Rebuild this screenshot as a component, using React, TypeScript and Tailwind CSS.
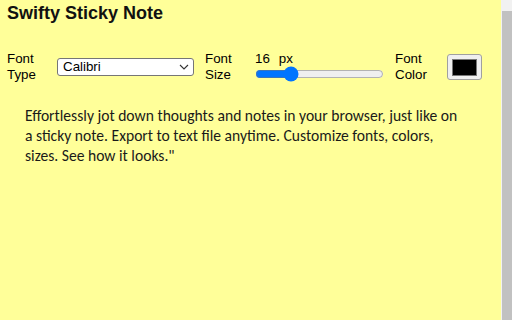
import React from "react";

export default function App() {
  return (
    <div className="flex w-[512px] h-[320px] overflow-hidden bg-[#ffff99]" style={{ fontFamily: '"Liberation Sans", Arial, sans-serif' }}>
      <div className="flex-1 flex flex-col text-black">
        <div className="pl-[7px] pt-[3px] text-[18px] font-bold leading-[21px] text-[#111]">Swifty Sticky Note</div>
        <div className="flex items-center mt-[26px] h-[34px] text-[13.33px] leading-[16px]">
          <div className="ml-[7px] w-[50px]">Font<br />Type</div>
          <div className="flex items-center justify-between w-[137px] h-[18px] bg-white border border-[#767676] rounded-[3px] pl-[5px] pr-[4px]">
            <span>Calibri</span>
            <svg width="10" height="6" viewBox="0 0 10 6" fill="none" stroke="#333" strokeWidth="1.1"><path d="M1 1l4 4 4-4" /></svg>
          </div>
          <div className="ml-[11px] w-[50px]">Font<br />Size</div>
          <div className="flex flex-col w-[129px] -mt-[2px]">
            <div className="leading-[15px] pl-[0px]"><span>16</span><span className="ml-[9px]">px</span></div>
            <input type="range" min={8} max={40} defaultValue={16} className="w-[129px] m-0" style={{ appearance: "auto", accentColor: "#0075ff" }} />
          </div>
          <div className="ml-[11px] w-[52px]">Font<br />Color</div>
          <div className="flex items-center justify-center w-[35px] h-[26px] bg-[#efefef] border border-[#a0a0a0] rounded-[3px]">
            <div className="w-[25px] h-[17px] bg-black border border-[#777]" />
          </div>
        </div>
        <div className="pl-[25px] mt-[22px] text-[15.6px] leading-[20px] text-[#1a1a1a]" style={{ fontFamily: 'Calibri, Carlito, Lato, sans-serif' }}>
          Effortlessly jot down thoughts and notes in your browser, just like on<br />
          a sticky note. Export to text file anytime. Customize fonts, colors,<br />
          sizes. See how it looks."
        </div>
      </div>
      <div className="w-[11px] flex flex-col bg-[#f1f1f1]">
        <div className="h-[11px]" />
        <div className="flex-1 ml-[1px] bg-[#c1c1c1]" />
      </div>
    </div>
  );
}
